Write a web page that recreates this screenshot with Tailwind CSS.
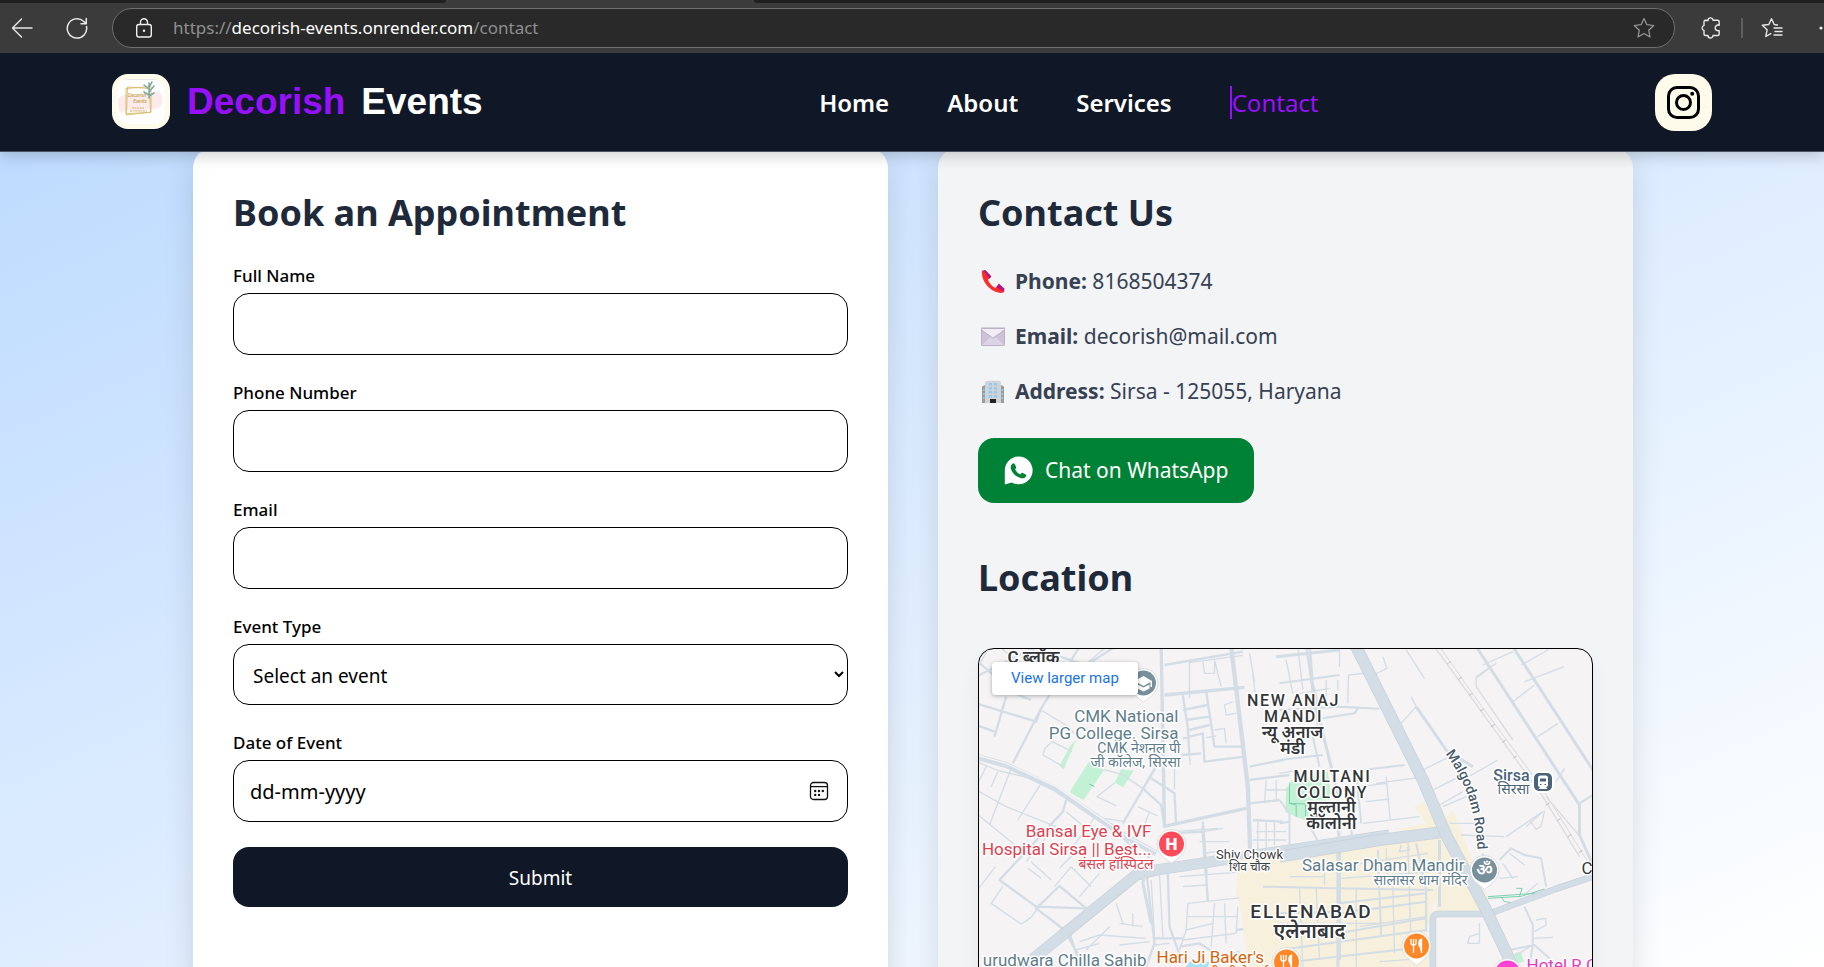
<!DOCTYPE html>
<html lang="en">
<head>
<meta charset="utf-8">
<title>Decorish Events - Contact</title>
<script src="https://cdn.jsdelivr.net/npm/@tailwindcss/browser@4"></script>
</head>
<body class="flex h-screen flex-col overflow-hidden font-['Noto_Sans',sans-serif] text-black">

<!-- Browser toolbar -->
<div class="relative z-20 flex h-[53px] shrink-0 items-center bg-[#3b3b3b] pt-[3px] text-[#e8e8e8]">
  <div class="absolute inset-x-0 top-0 flex h-[3px]" aria-hidden="true">
    <div class="w-[446px] rounded-br bg-[#202020]"></div>
    <div class="w-[308px]"></div>
    <div class="flex-1 rounded-bl bg-[#202020]"></div>
  </div>
  <button type="button" aria-label="Back" class="ml-[11px]">
    <svg class="size-[22px]" viewBox="0 0 22 22" fill="none" stroke="currentColor" stroke-width="1.4" stroke-linecap="round" stroke-linejoin="round"><path d="M21 11H1.5M10.5 2 1.5 11l9 9"/></svg>
  </button>
  <button type="button" aria-label="Refresh" class="ml-[33px]">
    <svg class="size-[22px]" viewBox="0 0 22 22" fill="none" stroke="currentColor" stroke-width="1.5" stroke-linecap="round" stroke-linejoin="round"><path d="M20.5 9.5A9.7 9.7 0 1 1 17.5 4.2L20 6.6M20.3 1.5v5.3h-5.3"/></svg>
  </button>
  <div class="ml-[24px] flex h-[40px] min-w-0 flex-1 items-center rounded-full border border-[#6e6e6e] bg-[#292929] pr-[19px] pl-[22px]">
    <svg class="h-[20px] w-[18px] shrink-0" viewBox="0 0 18 20" fill="none" stroke="#f0f0f0" stroke-width="1.4"><rect x="1.7" y="6.5" width="14.6" height="12.5" rx="2.2"/><path d="M5.5 6.5V4.2a3.5 3.5 0 0 1 7 0v2.3"/><circle cx="9" cy="12.7" r="1.2" fill="#f0f0f0" stroke="none"/></svg>
    <div class="ml-[20px] flex-1 text-[17px] text-[#8f8f8f]">https://<span class="text-white">decorish-events.onrender.com</span>/contact</div>
    <button type="button" aria-label="Add to favorites" class="text-[#9a9a9a]">
      <svg class="size-[22px]" viewBox="0 0 22 22" fill="none" stroke="currentColor" stroke-width="1.2" stroke-linejoin="round"><path d="m11 1.5 2.9 6.2 6.8.8-5 4.7 1.3 6.8-6-3.4L5 20l1.300-6.800-5-4.700 6.800-.8z"/></svg>
    </button>
  </div>
  <button type="button" aria-label="Extensions" class="ml-[25px]">
    <svg class="size-[22px]" viewBox="0 0 22 22" fill="none" stroke="currentColor" stroke-width="1.4" stroke-linejoin="round"><path d="M8 3.500a2.500 2.500 0 0 1 5-.2h4.700a1.500 1.500 0 0 1 1.500 1.500v3.400c-2.400-.6-4 .8-4 2.700s1.600 3.300 4 2.700v3.400a1.500 1.500 0 0 1-1.500 1.500H13a2.500 2.500 0 0 1-5 0H5.500A1.500 1.500 0 0 1 4 17v-3.600a2.600 2.600 0 0 1 0-5V4.800a1.500 1.500 0 0 1 1.500-1.500z"/></svg>
  </button>
  <div class="ml-[19px] h-[20px] w-[2px] bg-[#5f5f5f]"></div>
  <button type="button" aria-label="Favorites" class="ml-[18px]">
    <svg class="size-[22px]" viewBox="0 0 22 22" fill="none" stroke="currentColor" stroke-width="1.4" stroke-linejoin="round" stroke-linecap="round"><path d="m16.500 8-3.300-.5-2.700-5.700-2.700 5.700-6.500.8 4.800 4.500L4.800 19.500l5-2.800M13 11h8M14 14.500h7M13 18h8"/></svg>
  </button>
  <button type="button" aria-label="More" class="ml-[36px] w-[5px] overflow-hidden">
    <svg class="h-[4px] w-[18px]" viewBox="0 0 18 4" fill="currentColor"><circle cx="2" cy="2" r="1.600"/><circle cx="9" cy="2" r="1.600"/><circle cx="16" cy="2" r="1.600"/></svg>
  </button>
</div>

<!-- Site header -->
<header class="relative z-10 flex h-[99px] shrink-0 items-center justify-between border-b border-[#4a5565] bg-[#101726] px-28 shadow-[0_4px_14px_rgba(0,0,0,0.18)]">
  <a href="#" class="flex items-center pb-[2px]">
    <span class="flex h-[55px] w-[58px] items-center rounded-2xl bg-amber-50 p-[5px]">
      <svg class="h-[45px] w-[48px] rounded-xl bg-white" viewBox="0 0 48 45" role="img" aria-label="Decorish Events logo" fill="none">
        <path d="M6 0h36" stroke="#cfcfcf"/>
        <path d="M1 20c3-4 6-3 8-5 8 2 18 0 27-1 4-4 8-1 9 3 1 4 0 10-3 12-6 2-12 0-18 3-7 0-13-3-20 2-3-1-2-5-3-7 1-3-1-4 0-7z" fill="#fdeaea"/>
        <path d="M9 9.500 34 7.500V33L9 36zM10.500 8l22 1.500 1 24-24 1z" stroke="#d8bb6a" stroke-width=".9"/>
        <g font-family="Lato, sans-serif" font-style="italic" fill="#b8932f" text-anchor="middle"><text x="20" y="18" font-size="5">Decorish</text><text x="23" y="24" font-size="5">Events</text></g>
        <path d="M15 29h12M13 32h17" stroke="#cdb069" stroke-width="1.200" stroke-dasharray="2 .6"/>
        <path d="M32 19V4M32 10l-5-4M32 13l5-6M32 16l-5-3M32 17l5-3M32 8l3-5" stroke="#7fa9a0" stroke-width="1.500" stroke-linecap="round"/>
      </svg>
    </span>
    <span class="ml-[17px] flex gap-[16px] font-['Liberation_Sans',sans-serif] text-[37px] leading-[45px] font-bold text-white"><span class="text-[#9810fa]">Decorish</span><span>Events</span></span>
  </a>
  <nav class="flex items-center gap-[58px] text-[24px] leading-[33px] font-semibold text-white">
    <a href="#">Home</a>
    <a href="#">About</a>
    <a href="#">Services</a>
    <a href="#" aria-current="page" class="border-l-2 border-[#9810fa] font-normal text-[#9810fa]">Contact</a>
  </nav>
  <a href="#" aria-label="Instagram" class="flex size-[57px] items-center justify-center rounded-[20px] bg-amber-50">
    <svg class="size-[33px]" viewBox="0 0 33 33" fill="none" stroke="#000" stroke-width="3"><rect x="1.500" y="1.500" width="30" height="30" rx="8.500"/><circle cx="16.500" cy="16.500" r="7"/><circle cx="25.200" cy="7.800" r="2" fill="#000" stroke="none"/></svg>
  </a>
</header>

<main class="-mt-1 min-h-0 flex-1 overflow-hidden bg-linear-to-br from-[#bedbff] to-white pl-[2px]">
  <div class="mx-auto grid max-w-[1440px] grid-cols-2 gap-[50px]">

    <section class="rounded-[20px] bg-white p-[40px] shadow-[0_10px_30px_rgba(0,0,0,0.12)]">
      <h2 class="text-[36px] leading-[49px] font-bold text-[#1e2939]">Book an Appointment</h2>
      <form class="mt-[26px] flex flex-col gap-[25px]">
        <div>
          <label for="name" class="block text-[17px] leading-[26px] font-medium">Full Name</label>
          <input id="name" type="text" class="mt-1 block h-[62px] w-full rounded-2xl border border-black px-[15px] text-[19px]">
        </div>
        <div>
          <label for="phone" class="block text-[17px] leading-[26px] font-medium">Phone Number</label>
          <input id="phone" type="tel" class="mt-1 block h-[62px] w-full rounded-2xl border border-black px-[15px] text-[19px]">
        </div>
        <div>
          <label for="email" class="block text-[17px] leading-[26px] font-medium">Email</label>
          <input id="email" type="email" class="mt-1 block h-[62px] w-full rounded-2xl border border-black px-[15px] text-[19px]">
        </div>
        <div>
          <label for="event" class="block text-[17px] leading-[26px] font-medium">Event Type</label>
          <select id="event" class="mt-1 block h-[61px] w-full rounded-2xl border border-black px-[15px] pt-[2px] text-[19px]">
            <option>Select an event</option><option>Wedding</option><option>Birthday</option>
          </select>
        </div>
        <div>
          <label for="date" class="block text-[17px] leading-[26px] font-medium">Date of Event</label>
          <div class="mt-1 flex h-[62px] items-center rounded-2xl border border-black pr-[18px] pl-4">
            <input id="date" type="text" placeholder="dd-mm-yyyy" class="min-w-0 flex-1 pt-[2px] text-[20px] outline-none placeholder:text-black">
            <button type="button" aria-label="Open calendar">
              <svg class="size-[20px]" viewBox="0 0 20 20" fill="none" stroke="#111" stroke-width="1.300"><rect x="1.500" y="1.500" width="17" height="17" rx="3"/><path d="M1.500 5.600h17"/><g fill="#111" stroke="none"><circle cx="6.200" cy="10" r="1.200"/><circle cx="10" cy="10" r="1.200"/><circle cx="13.800" cy="10" r="1.200"/><circle cx="6.200" cy="13.900" r="1.200"/><circle cx="10" cy="13.900" r="1.200"/></g></svg>
            </button>
          </div>
        </div>
        <button type="submit" class="h-[60px] rounded-2xl bg-[#101828] pt-[2px] text-[19px] text-white">Submit</button>
      </form>
    </section>

    <section class="rounded-[20px] bg-gray-100 p-[40px] shadow-[0_10px_30px_rgba(0,0,0,0.12)]">
      <h2 class="text-[36px] leading-[49px] font-bold text-[#1e2939]">Contact Us</h2>
      <div class="mt-[27px] flex flex-col gap-[20px] text-[21px] leading-[35px] text-[#364153]">
        <p class="flex items-center">
          <svg class="mx-[3px] size-[24px]" viewBox="0 0 24 24"><path d="M1 1.500C0 12 11 24 21.500 22.800c1.600-.3 2-1.500 1.500-2.800l-5.500-4.600-3 2.400C11 16.500 7.800 12.500 7 9.500l3-2.500L4.500.8C3.200-.2 1.200 0 1 1.500z" fill="#fb2c2c"/><path d="M2.500.8 4.300 0l6 6.200-1.700 2.600zM15.200 17.200l2.600-3.600 5.800 5.200-.8 2.500z" fill="#b5127f"/></svg>
          <span class="ml-[7px]"><strong>Phone:</strong> 8168504374</span>
        </p>
        <p class="flex items-center">
          <svg class="mx-[3px] h-[24px] w-[24px]" viewBox="0 0 24 24"><rect y="3" width="24" height="18" rx="1" fill="#cdc3d8"/><path d="M.5 20.500 9 12.500h6l8.500 8z" fill="#ddd3e6"/><path d="M0 4.500V3h24v1.500L12 13.200z" fill="#f1ecf6" stroke="#b3a9bd" stroke-width=".9"/><rect x=".5" y="3.500" width="23" height="17" rx="1" fill="none" stroke="#bcb2c6"/></svg>
          <span class="ml-[7px]"><strong>Email:</strong> decorish@mail.com</span>
        </p>
        <p class="flex items-center">
          <svg class="mx-[3px] size-[24px]" viewBox="0 0 24 24"><path d="M1 6.500 4 5v18H1zM20 5l3 1.500V23h-3z" fill="#9b9b9b"/><path d="M4 2.500A2 2 0 0 1 6 .7h12a2 2 0 0 1 2 1.800V23H4z" fill="#d2d3d6"/><g fill="#8fcbf5"><path d="M7.800 3h3.200v2.600H7.800zM13 3h3.200v2.600H13zM7.800 7h3.200v2.600H7.800zM13 7h3.200v2.600H13zM7.800 11h3.200v2.600H7.800zM13 11h3.200v2.600H13zM7.800 15h3.200v2.600H7.800zM13 15h3.200v2.600H13zM2 9h1.600v2H2zM2 13h1.600v2H2zM2 17h1.600v2H2zM20.600 9h1.600v2h-1.600zM20.600 13h1.600v2h-1.600zM20.600 17h1.600v2h-1.600z"/></g><path d="M9 19h6v4H9z" fill="#222"/></svg>
          <span class="ml-[7px]"><strong>Address:</strong> Sirsa - 125055, Haryana</span>
        </p>
      </div>
      <a href="#" class="mt-[29px] inline-flex h-[65px] items-center gap-[12px] rounded-2xl bg-[#008236] px-[26px] text-[21px] text-white">
        <svg class="size-[29px]" viewBox="0 0 29 29"><path d="M14.500.5A13.900 13.900 0 1 1 7.700 26.400L.8 28.500l0-14A13.900 13.900 0 0 1 14.500.5z" fill="#fff"/><path d="M8.200 8.100c.8-.9 1.900-1 2.500-.1l1.400 2.900c.3.9-.2 1.500-1.100 2.400 1.300 2.500 2.900 4 5.300 5 .9-1.200 1.500-1.800 2.400-1.400l3 1.500c.9.500.7 1.600 0 2.400-1.400 1.600-3.200 1.800-5.200 1.100-4.600-1.500-7.500-4.200-9.400-8.500-.8-2.100-.4-3.900 1.100-5.300z" fill="#008236"/></svg>
        Chat on WhatsApp
      </a>
      <h2 class="mt-[50px] text-[36px] leading-[49px] font-bold text-[#1e2939]">Location</h2>

      <div class="relative mt-[46px] h-[482px] overflow-hidden rounded-2xl border border-black bg-[#f5f3f4] shadow-[0_12px_20px_rgba(0,0,0,0.06)]">
        <svg class="h-full w-full" viewBox="0 0 614 480" preserveAspectRatio="xMidYMin slice" role="img" aria-label="Map of Sirsa" fill="none">
          <!-- Western half: streets drawn at three units per pixel -->
          <g transform="translate(-9 -9) scale(.33333)" stroke="#d3dde5" stroke-linejoin="round">
            <path d="M805 700 1050 640v340H1010L860 880 800 770z" fill="#f7f0dc" stroke="none"/>
            <path d="M322 296 282 388 270 378 302 318zM358 365l46 24-62 92-42-24zM455 388l38 4-33 50-24-14zM950 440h40v95l-42-20z" fill="#c3f1d5" stroke="none"/>
            <path d="m360 432 15 8" stroke="#6fc8a5" stroke-width="3"/>
            <path stroke-width="4" d="M60 20 20 90M90 20 210 120M330 90 410 20M215 210 300 262M298 262l22 24M248 305l-22 20-5 20 65 38M248 305l60 30M404 389l54 14 70 48M436 428l-54 42 60 28M20 365l70 28 130 30 60 45M50 380l-25 50M85 395l-20 45M125 385 60 555M215 430l-70 110M20 450l90 50 150 60M20 520l110 90 30 35M290 515 385 595M385 520l-75 100M245 575l-75 90M330 625l-60 60M185 665l60 55M78 680 20 755M255 740l50-60 60 60M390 700l-60 70M215 715l-40-30M100 740 65 790l90 62 30-20 25-35M440 790l20 60M490 820v40M450 850l70 10M420 860l-70 70M330 905l60-20 140 10M450 915l90-10M320 930l70-20M540 515l-15 40 20 15M615 388v60M505 500l60 28M660 65v110M700 60l5 40h30V60M735 60l20 80M660 68l160-22M850 100l10 90M840 40l15 85M790 185l-25 10 5 30 30-5M735 270l30-5 5 45M740 288l-30 5M650 345l40-5M660 345l2 30M700 575l60-10M690 605h90M615 575l130-10M700 640l80-10M630 710l200-15M640 740l70-5M655 790l190-20M655 830h150M655 790l-5 80-20 60M735 790l-10 130M765 790l5 120M805 800l-5 80M650 870l80-20M640 900l160-20M570 700l10 190M545 720l10 170M600 910l-45 5M890 420l-5 70M920 420v60M890 450h70M865 545v110M890 545v90M915 545v70M850 600h100M850 630h90M860 575h90M465 545l-60-10"/>
            <path stroke-width="7" d="M20 110 180 30M180 30l60 10 110 35 80-50M20 190l180 55 15-40L330 20M110 170 75 290M20 255l55 20M215 205 130 370M20 60l115 100 50 20M565 370 460 550M430 560 490 625M525 450l50 45 10 65M545 415l70 45 5 95M640 165l15 100 5 80M640 210l75-15M650 240l70-10M660 270l60-15M710 155l25 165h80M640 295l60-15 5 85 120-15M635 345l60-5M290 480l-10 35-190 205 110 80L350 805 270 738 200 805 285 870 340 970M585 75l235-40M300 880l30 90M700 545l15 240M605 580l95-5M840 490l90-10M840 420l120-15M850 540l90 5M840 380l100-20M530 690l25 220-25 70M595 700l5 160 40 110M550 895h90M800 870l160-20M730 960l220-20M870 760l10 45M850 755l100-10M630 920l60-10 70 45 50-20"/>
            <path stroke-width="10" d="M585 165 825 142M575 20l10 540M700 560l10 140M580 560l250-55"/>
            <path stroke-width="13" d="M785 20 835 440 850 860 860 990"/>
            <path d="M20 350 110 375 255 445 470 590 560 640" stroke-width="18"/><path d="M20 345 110 370 260 440 475 590 560 635" stroke="#f5f3f4" stroke-width="4"/>
            <path d="M150 990 500 705 560 690 1260 585" stroke="#c6d0d9" stroke-width="34"/><path d="M150 990 500 705 560 690 1260 585" stroke-width="30"/>
            <path d="M540 640 520 730 545 850" stroke-width="9"/>
            <path d="M660 965h60l-10 30h-70z" fill="#a9e3f0" stroke="none"/>
          </g>
          <!-- Eastern half -->
          <g transform="translate(301 -9) scale(.33333)" stroke="#d3dde5" stroke-linejoin="round">
            <path d="M-130 660 400 575 345 570 440 550 405 500 435 485 475 560 520 510 550 585 590 690 640 820 470 815V780L440 830V990H-90L-120 790z" fill="#f7f0dc" stroke="none"/>
            <path d="M-130 660 240 600 420 620 460 810 440 870 450 990H-60z" fill="#f7f0dc" stroke="none"/>
            <path d="M30 425 145 395 155 480 75 540 18 515zM705 940l20-5 8 30-20 5z" fill="#c3f1d5" stroke="none"/>
            <path d="M30 430v60l20 5v35M28 490l50 2v38M625 775l100-6 70-22M625 770l170-12M710 745h18l-8 25M665 770l10 15 40 5 10-15" stroke="#7bd0b0" stroke-width="3"/>
            <path stroke-width="4" d="M180 20v60M310 50l12 35-40 20M380 30l55 85M205 190l2-85 75-8M20 60l20 100M55 20l15 130M140 120v60M175 120v30M60 160l90-15M395 170l15 30-45 50M430 390l100-50M480 495l70-40M450 455l80-40M490 500l70-30M510 550h95M655 360 550 420M790 515l-50 45M680 590l110-75M545 585l130 5M320 410l12 130M290 430l130-18M250 550l170-20M260 485l70-8M240 440l80-10M0 400l60-10M725 75l80-45M735 125l120-45M700 185l65-50M775 290l60-40M855 385l-25 40M610 75l90-40M590 115l45-35M660 715l55-5M670 670l30 45M690 640l45 35M740 760l35-30M600 850l0 60h-35l5-20 30-10M770 840l28-5 2 20-35 20M760 895l60-3M700 950l60-35M320 625l5 110M365 615l-5 20 30-5-5-20M30 710h105M60 740l10 240M110 740l10 220M135 655v80M185 680l260-40M185 715l270-20M230 745v240M340 740l5 200M385 620l10 300M240 860l200-30M0 850h300M300 965l140-10"/>
            <path stroke-width="6" d="M80 20l40 270M100 130l20 80M0 130l180-25M0 210 180 200l120 6M130 235l95-15 10-15M100 290l20 90M0 360l130-15M0 480l30 40v110M80 540l50 90M205 480l15 130M230 400l15 150M250 390l125-15M0 550l30-5M-50 740 170 745 460 750M180 790l260-30M180 820l260-35M0 820l180-5M175 880l265-45M0 930l440-60M0 970l440-50M295 630l10 260M410 610l30 140M440 745v130M660 660l35-35 40 20 50 10 15 85M735 800l25 55v60l-10 60M665 935l100-20 50 45M610 640v60M900 490l40-25"/>
            <path stroke-width="9" d="M410 200 500 330 580 380M-10 50 180 30M90 20l10 130 30 130 40 160 10 180v340M590 20l310 475v90l40 90M700 20l240 370M175 590v390M480 600v200"/>
            <path d="M480 20 600 190 785 440 940 690" stroke="#d9d9dc" stroke-width="3"/><path d="M465 20 790 470 900 650M650 70l-60 40v30l110 160M750 540l20 28 15-10 10-45M800 470l110 130" stroke="#dcdcde" stroke-width="4"/>
            <path d="M475 20 925 665" stroke="#bfc0c4" stroke-width="13" stroke-dasharray="2.500 55"/>
            <path stroke="#c6d0d9" stroke-width="20" d="M460 1000V840q0-18 18-18h150l200-75 120-40"/><path stroke-width="16" d="M460 1000V840q0-18 18-18h150l200-75 120-40"/>
            <path stroke="#c6d0d9" stroke-width="36" d="M0 650 300 600 500 575"/><path stroke-width="32" d="M0 650 300 600 500 575"/>
            <path stroke="#c6d0d9" stroke-width="36" d="M220 0 430 420 500 585 620 810 710 1000"/><path stroke-width="32" d="M220 0 430 420 500 585 620 810 710 1000"/>
          </g>
          <!-- Pins: white drop with a coloured disc -->
          <g fill="#fff" stroke="#c9ced2" stroke-width=".6">
            <path d="M165 53.500c-2-3-14.500-8-14.500-19.500a14.500 14.500 0 0 1 29 0c0 11.500-12.500 16.500-14.500 19.500z"/>
            <path d="M193 214.500c-2-3-14.500-8-14.500-19.500a14.500 14.500 0 0 1 29 0c0 11.500-12.500 16.500-14.500 19.500z"/>
            <path d="M506 240.500c-2-3-14.500-8-14.500-19.500a14.500 14.500 0 0 1 29 0c0 11.500-12.500 16.500-14.500 19.500z"/>
            <path d="M438 316.500c-2-3-14.500-8-14.500-19.500a14.500 14.500 0 0 1 29 0c0 11.500-12.500 16.500-14.500 19.500z"/>
            <path d="M308 332.500c-2-3-14.500-8-14.500-19.500a14.500 14.500 0 0 1 29 0c0 11.500-12.500 16.500-14.500 19.500z"/>
            <path d="M529 343.500c-2-3-14.500-8-14.500-19.500a14.500 14.500 0 0 1 29 0c0 11.500-12.500 16.500-14.500 19.500z"/>
          </g>
          <g>
            <circle cx="165" cy="34" r="12.500" fill="#78909c"/><circle cx="193" cy="195" r="12.500" fill="#fb4b59"/><circle cx="506" cy="221" r="12.500" fill="#78909c"/><circle cx="438" cy="297" r="12.500" fill="#ff8826"/><circle cx="308" cy="313" r="12.500" fill="#ff8826"/><circle cx="529" cy="324" r="12.500" fill="#fb43d4"/>
            <rect x="554.500" y="123" width="20" height="20" rx="6" fill="#4b647a" stroke="#fff" stroke-width="2"/>
          </g>
          <path d="m165 27-9 5 9 5 7-4v5h1.500v-6zM159 35.500v4l6 3 6-3v-4l-6 3z" fill="#fff"/>
          <path d="M559.500 129q0-2.500 2.500-2.500h5q2.500 0 2.500 2.500v7q0 2-2 2l1.500 2h-9l1.500-2q-2 0-2-2z" fill="#fff"/><path d="M561.500 129.500h6v3h-6z" fill="#4b647a"/><path d="M561.500 135.500h1.500M566 135.500h1.500" stroke="#4b647a"/>
          <g stroke="#fff" stroke-width="1.300"><path d="M432.500 290v4q0 2 2.500 2t2.500-2v-4M435 290v14"/><path d="M440.500 297v-4q0-2 2.500-3v14M440.500 297h2.500" fill="#fff"/><path d="M302.500 306v4q0 2 2.500 2t2.500-2v-4M305 306v14"/><path d="M310.500 313v-4q0-2 2.500-3v14M310.500 313h2.500" fill="#fff"/></g>
          <!-- Place names -->
          <g font-family="Roboto, 'Noto Sans', sans-serif" font-size="17" stroke="#fff" stroke-width="3" stroke-linejoin="round" paint-order="stroke">
            <g fill="#607d8b" text-anchor="end">
              <text x="200" y="73">CMK National</text><text x="200" y="90">PG College. Sirsa</text>
              <text x="202" y="104" font-size="14">CMK नेशनल पी</text><text x="202" y="118" font-size="14">जी कॉलेज, सिरसा</text>
              <text x="168" y="317">urudwara Chilla Sahib</text>
              <text x="486" y="222">Salasar Dham Mandir</text><text x="489" y="236" font-size="14">सालासर धाम मंदिर</text>
            </g>
            <g fill="#e0404f" text-anchor="end">
              <text x="173" y="188">Bansal Eye &amp; IVF</text><text x="173" y="206">Hospital Sirsa || Best...</text><text x="175" y="220" font-size="14">बंसल हॉस्पिटल</text>
            </g>
            <g fill="#d4650f"><text x="178" y="314">Hari Ji Baker's</text><text x="290" y="329" font-size="14" text-anchor="end">हरी जी बेकर्स</text></g>
            <text x="548" y="322" fill="#e23cc0">Hotel R G</text>
            <g fill="#3c4043" font-size="13" text-anchor="middle"><text x="271" y="210">Shiv Chowk</text><text x="271" y="222" font-size="12">शिव चौक</text></g>
            <g fill="#333639" font-weight="500" text-anchor="middle">
              <text x="55" y="14" font-size="17" font-weight="600">C ब्लॉक</text>
              <g font-size="16" class="tracking-widest"><text x="315" y="57">NEW ANAJ</text><text x="315" y="73">MANDI</text><text x="354" y="133">MULTANI</text><text x="354" y="149">COLONY</text></g>
              <g font-size="17" font-weight="600"><text x="314" y="89">न्यू अनाज</text><text x="314" y="105">मंडी</text><text x="353" y="164">मुल्तानी</text><text x="353" y="180">कॉलोनी</text></g>
              <text x="333" y="269" font-size="19" class="tracking-widest">ELLENABAD</text><text x="331" y="289" font-size="20" font-weight="600">एलेनाबाद</text>
            </g>
            <text x="603" y="225" fill="#333639">C</text>
            <g fill="#4b647a" text-anchor="end"><text x="551" y="132" font-size="16" font-weight="500">Sirsa</text><text x="551" y="145" font-size="14">सिरसा</text></g>
            <path id="malgodam" d="M467 105C484 127 498 158 499 206" stroke="none"/>
            <text font-size="14" fill="#4a5b6b" font-weight="500"><textPath href="#malgodam">Malgodam Road</textPath></text>
          </g>
          <g font-family="Roboto, sans-serif" fill="#fff" text-anchor="middle"><text x="193" y="201" font-size="17" font-weight="900">H</text><text x="506" y="227" font-size="17" font-weight="600" font-family="'Noto Sans', sans-serif">ॐ</text></g>
        </svg>
        <a href="#" class="absolute top-[13px] left-[13px] flex h-[33px] items-center rounded-sm bg-white px-[19px] font-['Roboto',sans-serif] text-[15px] text-[#1a73e8] shadow-[0_1px_4px_rgba(0,0,0,0.3)]">View larger map</a>
      </div>
    </section>
  </div>
</main>
</body>
</html>
